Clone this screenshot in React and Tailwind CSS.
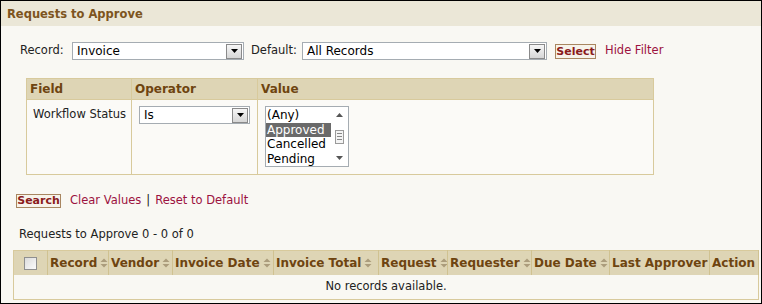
import React from "react";

const font = { fontFamily: '"DejaVu Sans", Verdana, sans-serif' };

function SortIcon() {
  return (
    <svg width="8" height="10" viewBox="0 0 8 10" className="inline-block ml-[3px] align-[-1px]">
      <path d="M4 0.5 L7.5 4 L0.5 4 Z" fill="#ab9c7c" />
      <path d="M4 9.5 L7.5 6 L0.5 6 Z" fill="#ab9c7c" />
    </svg>
  );
}

function DropButton() {
  return (
    <div className="w-[16px] h-[15px] mr-[1px] border border-[#8a8a8a] bg-gradient-to-b from-[#f6f6f6] to-[#d6d6d6] flex items-center justify-center">
      <svg width="7" height="4" viewBox="0 0 7 4">
        <path d="M0 0 L7 0 L3.5 4 Z" fill="#000" />
      </svg>
    </div>
  );
}

function Select({ value, width }) {
  return (
    <div className={`${width} h-[18px] border border-[#a5acb2] bg-white flex items-center justify-between`}>
      <span className="pl-[4px] text-[12px] text-black leading-none">{value}</span>
      <DropButton />
    </div>
  );
}

function ListBox() {
  const items = ["(Any)", "Approved", "Cancelled", "Pending"];
  return (
    <div className="w-[84px] h-[61px] border border-[#a5acb2] bg-white flex">
      <div className="flex-1 pt-[1px] overflow-hidden">
        {items.map((it) => (
          <div
            key={it}
            className={`h-[14.5px] pl-[1px] text-[12px] leading-[14.5px] ${
              it === "Approved" ? "bg-[#6a6a6a] text-white w-[65px]" : "text-black"
            }`}
          >
            {it}
          </div>
        ))}
      </div>
      <div className="w-[17px] flex flex-col items-center justify-between py-[3px] bg-white">
        <svg width="7" height="4" viewBox="0 0 7 4" className="mt-[3px]">
          <path d="M3.5 0 L7 4 L0 4 Z" fill="#555" />
        </svg>
        <div className="w-[9px] h-[14px] border border-[#9a9a9a] bg-[#f4f4f4] flex flex-col items-center justify-center gap-[2px]">
          <div className="w-[5px] h-px bg-[#888]" />
          <div className="w-[5px] h-px bg-[#888]" />
          <div className="w-[5px] h-px bg-[#888]" />
        </div>
        <svg width="7" height="4" viewBox="0 0 7 4" className="mb-[3px]">
          <path d="M0 0 L7 0 L3.5 4 Z" fill="#555" />
        </svg>
      </div>
    </div>
  );
}

export default function App() {
  const cols = [
    { name: "Record", w: "w-[61px]", sort: true },
    { name: "Vendor", w: "w-[64px]", sort: true },
    { name: "Invoice Date", w: "w-[101px]", sort: true },
    { name: "Invoice Total", w: "w-[105px]", sort: true },
    { name: "Request", w: "w-[69px]", sort: true },
    { name: "Requester", w: "w-[84px]", sort: true },
    { name: "Due Date", w: "w-[78px]", sort: true },
    { name: "Last Approver", w: "w-[100px]", sort: false },
    { name: "Action", w: "w-[49px]", sort: false },
  ];

  return (
    <div style={font} className="w-[762px] h-[304px] border border-black bg-[#f9f8f3] text-[11.5px] text-[#222] overflow-hidden">
      {/* Title bar */}
      <div className="h-[25px] bg-[#ebe7d7] flex items-center px-[6px] pt-[2px]">
        <span className="font-bold text-[11.5px] text-[#7d5420]">Requests to Approve</span>
      </div>

      {/* Record / default row */}
      <div className="flex items-center mt-[16px] pl-[19px]">
        <span className="w-[52px]">Record:</span>
        <Select value="Invoice" width="w-[172px]" />
        <span className="ml-[7px] w-[51px]">Default:</span>
        <Select value="All Records" width="w-[245px]" />
        <button className="ml-[8px] h-[15px] w-[41px] border border-[#a88660] bg-[#f7f3ea] text-[#8a1b1b] font-bold text-[11px] leading-none flex items-center justify-center">
          Select
        </button>
        <a className="ml-[9px] text-[#9c1240]">Hide Filter</a>
      </div>

      {/* Filter table */}
      <table className="ml-[25px] mt-[18px] w-[628px] table-fixed border-collapse border border-[#d8ca9c]">
        <thead>
          <tr className="h-[21px] bg-[#ded5b5] text-[#6e4410] font-bold text-left text-[12px]">
            <th className="w-[105px] pl-[3px] border border-[#d8ca9c]">Field</th>
            <th className="w-[126px] pl-[3px] border border-[#d8ca9c]">Operator</th>
            <th className="pl-[3px] border border-[#d8ca9c]">Value</th>
          </tr>
        </thead>
        <tbody>
          <tr className="h-[75px] bg-[#fbfaf7] align-top">
            <td className="pl-[6px] pt-[6px] border border-[#d8ca9c]">Workflow Status</td>
            <td className="pl-[7px] pt-[6px] border border-[#d8ca9c]">
              <Select value="Is" width="w-[111px]" />
            </td>
            <td className="pl-[7px] pt-[6px] border border-[#d8ca9c]">
              <ListBox />
            </td>
          </tr>
        </tbody>
      </table>

      {/* Search row */}
      <div className="flex items-center mt-[17px] pl-[15px]">
        <button className="h-[14px] w-[45px] border border-[#a88660] bg-[#f7f3ea] text-[#8a1b1b] font-bold text-[11px] leading-none flex items-center justify-center">
          Search
        </button>
        <a className="ml-[9px] text-[#9c1240]">Clear Values</a>
        <span className="mx-[5px] text-[#222]">|</span>
        <a className="text-[#9c1240]">Reset to Default</a>
      </div>

      <div className="mt-[19px] pl-[18px] h-[13px] leading-[13px]">Requests to Approve 0 - 0 of 0</div>

      {/* Grid */}
      <table className="ml-[12px] mt-[9px] w-[745px] table-fixed border-collapse border border-[#d8ca9c]">
        <thead>
          <tr className="h-[24px] bg-[#ded5b5] text-[#6e4410] font-bold text-left text-[12px]">
            <th className="w-[34px] border-r border-[#d0c291]">
              <div className="ml-[10px] w-[13px] h-[13px] border border-[#8f8f8f] bg-gradient-to-br from-[#dcdcdc] to-[#fbfbfb]" />
            </th>
            {cols.map((c) => (
              <th key={c.name} className={`${c.w} pl-[2px] border-r border-[#d0c291] whitespace-nowrap overflow-hidden`}>
                {c.name}
                {c.sort && <SortIcon />}
              </th>
            ))}
          </tr>
        </thead>
        <tbody>
          <tr className="h-[25px] bg-[#f9f8f3]">
            <td colSpan={10} className="text-center">No records available.</td>
          </tr>
        </tbody>
      </table>
    </div>
  );
}
